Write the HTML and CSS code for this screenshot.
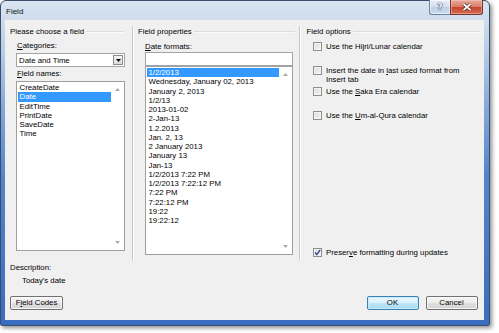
FILE: index.html
```html
<!DOCTYPE html>
<html>
<head>
<meta charset="utf-8">
<title>Field</title>
<link rel="stylesheet" href="styles.css">
</head>
<body>
<div class="window">
  <div class="titlebar">
    <span class="title">Field</span>
    <div class="caption-buttons">
      <div class="cap-btn help"><span>?</span></div>
      <div class="cap-btn close">
        <svg width="10" height="8" viewBox="0 0 10 8"><path d="M1.5 1 L8.5 7 M8.5 1 L1.5 7" stroke="#4a2420" stroke-width="3.2" fill="none"/><path d="M1.5 1 L8.5 7 M8.5 1 L1.5 7" stroke="#fff" stroke-width="1.7" fill="none"/></svg>
      </div>
    </div>
  </div>
  <div class="client">
    <div class="columns">
      <section class="col col-choose">
        <div class="group-head"><span>Please choose a field</span><i class="rule"></i></div>
        <div class="block">
          <div class="lbl"><u>C</u>ategories:</div>
          <div class="combo">
            <span>Date and Time</span>
            <span class="drop"><svg width="5" height="3" viewBox="0 0 5 3"><polygon points="0,0 5,0 2.5,3" fill="#000"/></svg></span>
          </div>
          <div class="lbl lbl-tight"><u>F</u>ield names:</div>
          <div class="list list-names">
            <ul class="items">
              <li>CreateDate</li>
              <li class="sel">Date</li>
              <li>EditTime</li>
              <li>PrintDate</li>
              <li>SaveDate</li>
              <li>Time</li>
            </ul>
            <div class="scroll">
              <svg width="5" height="3" viewBox="0 0 5 3"><polygon points="2.5,0 5,3 0,3" fill="#a9a9a9"/></svg>
              <svg width="5" height="3" viewBox="0 0 5 3"><polygon points="0,0 5,0 2.5,3" fill="#a9a9a9"/></svg>
            </div>
          </div>
        </div>
      </section>
      <div class="vsep"></div>
      <section class="col col-props">
        <div class="group-head"><span>Field properties</span><i class="rule"></i></div>
        <div class="block">
          <div class="lbl lbl-flush"><u>D</u>ate formats:</div>
          <div class="input"></div>
          <div class="list list-formats">
            <ul class="items">
              <li class="sel">1/2/2013</li>
              <li>Wednesday, January 02, 2013</li>
              <li>January 2, 2013</li>
              <li>1/2/13</li>
              <li>2013-01-02</li>
              <li>2-Jan-13</li>
              <li>1.2.2013</li>
              <li>Jan. 2, 13</li>
              <li>2 January 2013</li>
              <li>January 13</li>
              <li>Jan-13</li>
              <li>1/2/2013 7:22 PM</li>
              <li>1/2/2013 7:22:12 PM</li>
              <li>7:22 PM</li>
              <li>7:22:12 PM</li>
              <li>19:22</li>
              <li>19:22:12</li>
            </ul>
            <div class="scroll">
              <svg width="5" height="3" viewBox="0 0 5 3"><polygon points="2.5,0 5,3 0,3" fill="#a9a9a9"/></svg>
              <svg width="5" height="3" viewBox="0 0 5 3"><polygon points="0,0 5,0 2.5,3" fill="#a9a9a9"/></svg>
            </div>
          </div>
        </div>
      </section>
      <div class="vsep"></div>
      <section class="col col-options">
        <div class="group-head"><span>Field options</span><i class="rule"></i></div>
        <div class="opt opt-1"><span class="cb"></span><span>Use the Hi<u>j</u>ri/Lunar calendar</span></div>
        <div class="opt opt-2"><span class="cb"></span><span>Insert the date in <u>l</u>ast used format from<br>Insert tab</span></div>
        <div class="opt opt-3"><span class="cb"></span><span>Use the <u>S</u>aka Era calendar</span></div>
        <div class="opt opt-4"><span class="cb"></span><span>Use the <u>U</u>m-al-Qura calendar</span></div>
        <div class="opt opt-keep"><span class="cb checked"><svg width="9" height="9" viewBox="0 0 9 9"><path d="M2 4.4 L3.8 6.6 L7.2 1.8" stroke="#2c4a80" stroke-width="1.4" fill="none"/></svg></span><span>Preser<u>v</u>e formatting during updates</span></div>
      </section>
    </div>
    <div class="description">
      <div class="desc-label">Description:</div>
      <div class="desc-text">Today's date</div>
    </div>
    <div class="button-row">
      <button class="btn btn-codes">F<u>i</u>eld Codes</button>
      <button class="btn btn-default">OK</button>
      <button class="btn">Cancel</button>
    </div>
  </div>
</div>
</body>
</html>
```

FILE: styles.css
```css
* { box-sizing: border-box; }

html, body {
  margin: 0;
  padding: 0;
  background: #ffffff;
}

body {
  width: 499px;
  height: 333px;
  overflow: hidden;
  font-family: "Liberation Sans", Arial, sans-serif;
  font-size: 7.8px;
  color: #000;
}

u { text-decoration: underline; text-underline-offset: 1px; }

.window {
  width: 490px;
  height: 326px;
  display: flex;
  flex-direction: column;
  padding: 0 5px 5px 4px;
  border: 1px solid #3a4d6c;
  border-radius: 6px 6px 2px 2px;
  background: linear-gradient(to bottom, #dae5f2 0px, #cddbec 20px, #b7cce6 50px, #86a9d9 105px, #5485cb 175px, #3a6cc0 326px);
  box-shadow: 2px 2px 4px rgba(0, 0, 0, 0.45);
}

/* title bar */
.titlebar {
  height: 19px;
  flex: none;
  display: flex;
  align-items: center;
  padding: 0 1px 0 1px;
}

.title {
  font-size: 8px;
  color: #111;
  margin-top: 1px;
}

.caption-buttons {
  margin-left: auto;
  align-self: flex-start;
  margin-top: -1px;
  display: flex;
}

.cap-btn {
  height: 15px;
  display: flex;
  align-items: center;
  justify-content: center;
}

.help {
  width: 21px;
  border: 1px solid #71829f;
  border-right: none;
  border-top: none;
  border-radius: 0 0 0 3px;
  background: linear-gradient(to bottom, #e9eff7 0%, #d2deee 50%, #bfd0e6 51%, #cbdcf0 100%);
  box-shadow: inset 0 0 0 1px rgba(255, 255, 255, 0.5);
}

.help span {
  font-family: "DejaVu Sans", sans-serif;
  font-weight: bold;
  font-size: 9px;
  color: #fff;
  line-height: 9px;
  text-shadow: 0 0 1px #2b3d5c, 0 0 1px #2b3d5c, 0 0 1px #2b3d5c;
}

.close {
  width: 33px;
  border: 1px solid #70362c;
  border-top: none;
  border-radius: 0 0 3px 0;
  background: linear-gradient(to bottom, #e8ab9e 0%, #d97a66 50%, #c7432d 51%, #d66a50 100%);
  box-shadow: inset 0 0 0 1px rgba(255, 210, 200, 0.45);
}

/* client area */
.client {
  flex: 1;
  display: flex;
  flex-direction: column;
  background: #f0f0f0;
  padding: 6px 0 10px 5px;
}

.columns {
  display: grid;
  grid-template-columns: 122px 1px 166px 1px 1fr;
  height: 234px;
}

.vsep {
  background: #c6c6c6;
  box-shadow: 1px 0 0 #ffffff;
}

.col {
  display: flex;
  flex-direction: column;
  min-width: 0;
}

.group-head {
  display: flex;
  align-items: center;
  height: 12px;
  line-height: 12px;
  white-space: nowrap;
}

.rule {
  flex: 1;
  height: 2px;
  margin-left: 2px;
  border-top: 1px solid #d9dde3;
  border-bottom: 1px solid #fbfbfb;
}

.col-choose { padding-right: 7px; }
.col-choose .group-head { padding-right: 1px; }
.col-choose .block { margin-left: 6px; }

.col-props .group-head { padding: 0 4px 0 5px; }
.col-props .block { margin: 0 6px 0 12px; }

.col-options { padding-bottom: 3.5px; }
.col-options .group-head { padding: 0 4px 0 6.5px; }

.lbl {
  height: 11px;
  line-height: 11px;
  margin-top: 2px;
  padding-left: 1px;
}

.lbl-tight { margin-top: 1px; }
.lbl-flush { margin-top: 2.5px; padding-left: 0; }

.combo {
  height: 14px;
  margin-top: 2px;
  display: flex;
  align-items: center;
  padding-left: 2px;
  background: #fff;
  border: 1px solid #a4a4a4;
}

.drop {
  margin-left: auto;
  margin-right: 1px;
  width: 10px;
  height: 10px;
  display: flex;
  align-items: center;
  justify-content: center;
  border: 1px solid #8d8d8d;
  background: linear-gradient(to bottom, #f6f6f6, #dadada);
}

.input {
  height: 14px;
  margin-top: 0.5px;
  background: #fff;
  border: 1px solid #a4a4a4;
}

.list {
  display: flex;
  background: #fff;
  border: 1px solid #a0a0a0;
  padding: 1px 0 1px 1px;
}

.list-names { height: 170px; margin-top: 2px; }
.list-formats { height: 189px; }

.items {
  flex: 1;
  list-style: none;
  margin: 0;
  padding: 0;
  min-width: 0;
}

.items li {
  height: 9.27px;
  line-height: 9.27px;
  padding-left: 1.5px;
  white-space: nowrap;
}

.items li.sel {
  background: #3399ff;
  color: #fff;
}

.scroll {
  flex: none;
  width: 13px;
  display: flex;
  flex-direction: column;
  justify-content: space-between;
  align-items: center;
  padding: 4.5px 0 5px;
}

.scroll svg { display: block; }

/* options */
.opt {
  display: flex;
  align-items: flex-start;
  gap: 4px;
  line-height: 9px;
  padding-left: 13px;
  white-space: nowrap;
}

.opt-1 { margin-top: 3.5px; }
.opt-2 { margin-top: 15px; }
.opt-3 { margin-top: 3px; }
.opt-4 { margin-top: 15.5px; }
.opt-keep { margin-top: auto; }

.cb {
  flex: none;
  width: 9px;
  height: 9px;
  border: 1px solid #8f8f8f;
  background: linear-gradient(135deg, #d9d9d9, #f7f7f7);
  box-shadow: inset 0 0 0 1px #f4f4f4;
  position: relative;
}

.cb.checked svg {
  position: absolute;
  left: -1px;
  top: -1px;
}

/* description */
.description {
  margin-top: 2px;
}

.desc-label {
  line-height: 11px;
}

.desc-text {
  line-height: 11px;
  margin-top: 1.5px;
  padding-left: 12px;
}

/* buttons */
.button-row {
  display: flex;
  gap: 7px;
  margin-top: 10.5px;
  padding-right: 6.5px;
}

.btn {
  height: 14px;
  width: 52px;
  padding: 0;
  font-family: inherit;
  font-size: 7.8px;
  color: #000;
  line-height: 12px;
  border: 1px solid #707070;
  border-radius: 2px;
  background: linear-gradient(to bottom, #f4f4f4 0%, #ececec 50%, #dfdfdf 51%, #d3d3d3 100%);
  box-shadow: inset 0 0 0 1px rgba(255, 255, 255, 0.75);
}

.btn-codes {
  width: 53px;
  margin-right: auto;
}

.btn-default {
  border-color: #3c7fb1;
  background: linear-gradient(to bottom, #eaf6fd 0%, #d9f0fc 50%, #bee6fd 51%, #a7d9f5 100%);
  box-shadow: inset 0 0 0 1px rgba(200, 235, 252, 0.9);
}
```
